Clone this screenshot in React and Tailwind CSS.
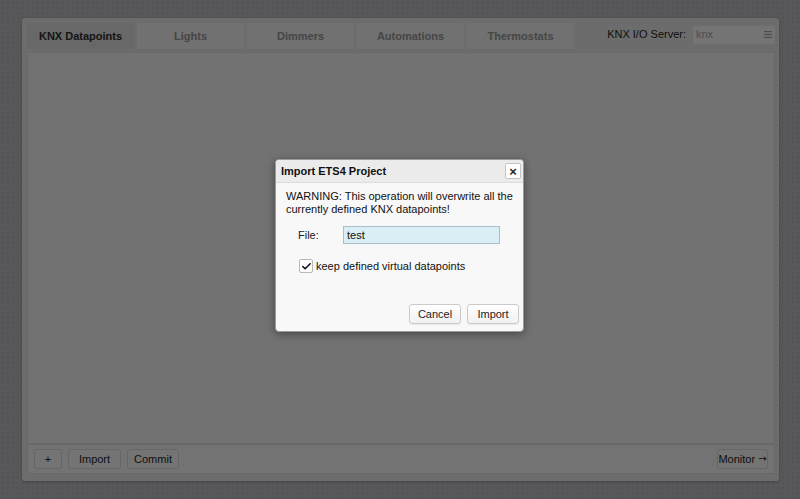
import { Check } from 'lucide-react';

const TABS = ['KNX Datapoints', 'Lights', 'Dimmers', 'Automations', 'Thermostats'];

function ToolButton({ children, className = '' }) {
  return (
    <button
      className={`flex h-[20px] items-center justify-center whitespace-nowrap rounded-[3px] border border-[#cdcdcd] bg-[#e8e8e8] text-[11px] leading-none text-[#222] ${className}`}
    >
      {children}
    </button>
  );
}

function DialogButton({ children }) {
  return (
    <button className="h-[20px] w-[52px] rounded-[3px] border border-[#cacaca] bg-gradient-to-b from-white to-[#f1f1f1] text-[11px] leading-none text-[#222] shadow-[0_1px_0_rgba(0,0,0,0.05)]">
      {children}
    </button>
  );
}

export default function App() {
  return (
    <div className="relative h-[499px] w-[800px] overflow-hidden bg-[#b0b1b7] bg-[radial-gradient(#a4a5ab_1px,transparent_1px)] bg-[length:5px_5px] pl-[22px] pt-[18px] font-['Liberation_Sans',Arial,sans-serif]">
      <div className="flex h-[463px] w-[757px] flex-col rounded-[3px] bg-[#d9d9d9] pb-[7px] pl-[5px] pr-[4px] pt-[5px] shadow-[0_1px_3px_rgba(0,0,0,0.25)]">
        <div className="flex h-[26px] items-stretch">
          <div className="flex gap-[3px]">
            {TABS.map((t, i) => (
              <div
                key={t}
                className={`flex w-[107px] items-center justify-center rounded-t-[3px] text-[11px] font-bold ${
                  i === 0 ? 'bg-[#d0d0d0] text-[#2a2a2a]' : 'bg-[#e2e2e2] text-[#8c8c8c]'
                }`}
              >
                {t}
              </div>
            ))}
          </div>
          <div className="ml-auto flex items-center gap-[7px] pb-[3px]">
            <span className="text-[11px] text-[#222]">KNX I/O Server:</span>
            <div className="flex h-[18px] w-[82px] items-center justify-between bg-[#e9e9e9] pl-[3px] pr-[3px] text-[11px] text-[#9a9a9a]">
              <span>knx</span>
              <svg width="8" height="7" viewBox="0 0 8 7" fill="#9a9a9a">
                <rect y="0" width="8" height="1.2" />
                <rect y="2.9" width="8" height="1.2" />
                <rect y="5.8" width="8" height="1.2" />
              </svg>
            </div>
          </div>
        </div>
        <div className="mt-[3px] flex-1 border border-[#d3d3d3] bg-[#e4e4e4]" />
        <div className="flex h-[30px] items-center gap-[6px] border border-[#d0d0d0] bg-[#e6e6e6] px-[6px]">
          <ToolButton className="w-[28px]">+</ToolButton>
          <ToolButton className="w-[53px]">Import</ToolButton>
          <ToolButton className="w-[52px]">Commit</ToolButton>
          <ToolButton className="ml-auto w-[51px] gap-[3px]">
            Monitor
            <span className="font-['DejaVu_Sans',sans-serif] text-[10px]">→</span>
          </ToolButton>
        </div>
      </div>

      <div className="absolute inset-0 bg-black/50" />

      <div className="absolute left-[275px] top-[159px] flex h-[173px] w-[249px] flex-col overflow-hidden rounded-[4px] border border-[#9a9a9a] bg-[#f8f8f8] shadow-[0_2px_8px_rgba(0,0,0,0.4)]">
        <div className="flex h-[23px] items-center justify-between border-b border-[#dcdcdc] bg-[#ebebeb] pl-[5px] pr-[2px]">
          <span className="text-[11px] font-bold text-[#111]">Import ETS4 Project</span>
          <button className="flex h-[16px] w-[16px] items-center justify-center rounded-[2px] border border-[#c4c4c4] bg-white text-[13px] font-bold leading-none text-[#222]">
            ×
          </button>
        </div>
        <div className="flex flex-1 flex-col pl-[10px] pr-[4px] pt-[7px]">
          <p className="text-[11px] leading-[13px] text-[#111]">
            WARNING: This operation will overwrite all the
            <br />
            currently defined KNX datapoints!
          </p>
          <div className="mt-[10px] flex items-center pl-[12px]">
            <span className="w-[45px] text-[11px] text-[#222]">File:</span>
            <div className="flex h-[18px] w-[157px] items-center border border-[#a9bfca] bg-[#d9eef5] pl-[3px] text-[11px] text-[#111]">
              test
            </div>
          </div>
          <label className="mt-[14px] flex items-center gap-[3px] pl-[13px] text-[11px] text-[#111]">
            <span className="flex h-[14px] w-[14px] items-center justify-center rounded-[2px] border border-[#b9b9b9] bg-white">
              <Check size={11} strokeWidth={3.5} color="#111" />
            </span>
            keep defined virtual datapoints
          </label>
          <div className="mb-[7px] mt-auto flex justify-end gap-[6px]">
            <DialogButton>Cancel</DialogButton>
            <DialogButton>Import</DialogButton>
          </div>
        </div>
      </div>
    </div>
  );
}
